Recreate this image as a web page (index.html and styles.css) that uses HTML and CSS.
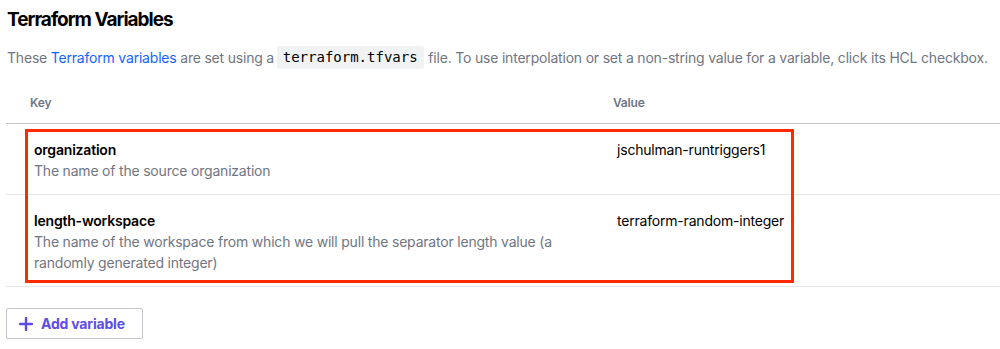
FILE: index.html
```html
<!DOCTYPE html>
<html>
<head>
<meta charset="utf-8">
<link rel="stylesheet" href="styles.css">
</head>
<body>
<div class="page">
  <h1 class="title">Terraform Variables</h1>
  <p class="intro">These <a class="link" href="#">Terraform variables</a> are set using a <code class="code">terraform.tfvars</code> file. To use interpolation or set a non-string value for a variable, click its HCL checkbox.</p>
  <div class="table">
    <div class="thead">
      <div class="th">Key</div>
      <div class="th th-value">Value</div>
    </div>
    <div class="tbody">
      <div class="row">
        <div class="cell-key">
          <div class="key-name">organization</div>
          <div class="key-desc">The name of the source organization</div>
        </div>
        <div class="cell-value">jschulman-runtriggers1</div>
      </div>
      <div class="row">
        <div class="cell-key">
          <div class="key-name">length-workspace</div>
          <div class="key-desc">The name of the workspace from which we will pull the separator length value (a randomly generated integer)</div>
        </div>
        <div class="cell-value">terraform-random-integer</div>
      </div>
      <div class="highlight"></div>
    </div>
  </div>
  <button class="add-btn">
    <svg class="plus" width="14" height="14" viewBox="0 0 14 14"><path d="M7 1v12M1 7h12" stroke="currentColor" stroke-width="2.4" stroke-linecap="round"/></svg>
    <span>Add variable</span>
  </button>
</div>
</body>
</html>
```

FILE: styles.css
```css
html, body {
  margin: 0;
  padding: 0;
  background: #fff;
}
body {
  font-family: Inter, "Noto Sans", sans-serif;
  color: #000;
  letter-spacing: -0.2px;
}
.page {
  padding: 8px 0 0 6px;
}
.title {
  margin: 0 0 0 1px;
  font-size: 19px;
  line-height: 24px;
  font-weight: 700;
  letter-spacing: -1px;
}
.intro {
  margin: 14px 0 0 1px;
  font-size: 14px;
  line-height: 23px;
  color: #6f7682;
}
.link {
  color: #1563ff;
  text-decoration: none;
}
.code {
  display: inline-block;
  font-family: "DejaVu Sans Mono", monospace;
  font-size: 14px;
  line-height: 23px;
  letter-spacing: 0;
  color: #000;
  background: #f1f2f3;
  padding: 0 6px;
  margin: 0 1px 0 -1px;
  border-radius: 2px;
  vertical-align: top;
}
.table {
  margin-top: 14px;
}
.thead {
  display: grid;
  grid-template-columns: 607px 1fr;
  border-bottom: 1px solid #c2c5cb;
  padding: 11px 0 11px;
}
.th {
  font-size: 12px;
  line-height: 18px;
  font-weight: 600;
  color: #6f7682;
  padding-left: 24px;
}
.th-value {
  padding-left: 0;
}
.tbody {
  position: relative;
}
.row {
  display: grid;
  grid-template-columns: 607px 1fr;
  border-bottom: 1px solid #e5e7eb;
  padding: 15px 0 13px;
}
.cell-key {
  padding-left: 28px;
  padding-right: 40px;
}
.key-name {
  font-size: 14px;
  line-height: 21px;
  font-weight: 600;
  color: #000;
}
.key-desc {
  font-size: 14px;
  line-height: 21px;
  color: #6f7682;
}
.cell-value {
  padding-left: 4px;
  font-size: 14px;
  line-height: 21px;
  color: #000;
}
.highlight {
  position: absolute;
  left: 19px;
  top: 5px;
  width: 763px;
  height: 148px;
  border: 3px solid #ff2a00;
  pointer-events: none;
}
.add-btn {
  margin-top: 21px;
  display: flex;
  align-items: center;
  gap: 8px;
  height: 31px;
  width: 137px;
  padding: 0 0 0 12px;
  background: #fff;
  border: 1px solid #c2c5cb;
  border-radius: 2px;
  box-shadow: 0 2px 0 #eceef1;
  font-family: Inter, "Noto Sans", sans-serif;
  font-size: 14px;
  font-weight: 700;
  letter-spacing: -0.2px;
  color: #5c4ee5;
}
.plus {
  display: block;
}
```
